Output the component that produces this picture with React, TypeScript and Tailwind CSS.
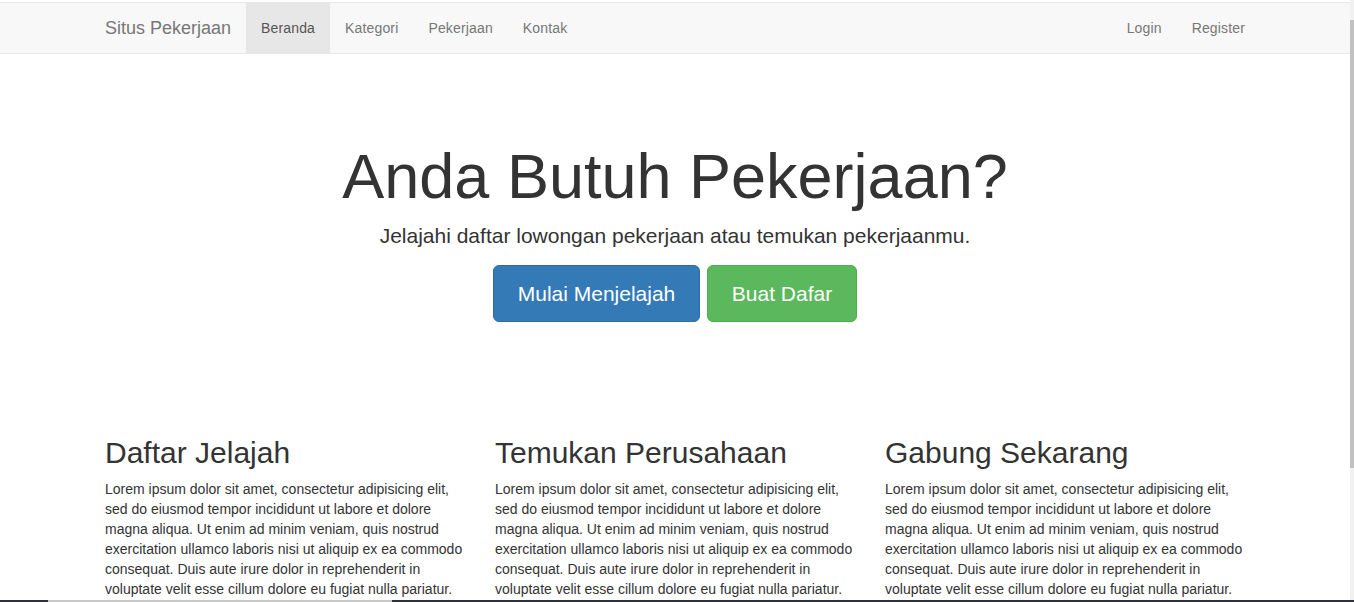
import React from "react";

const lorem =
  "Lorem ipsum dolor sit amet, consectetur adipisicing elit, sed do eiusmod tempor incididunt ut labore et dolore magna aliqua. Ut enim ad minim veniam, quis nostrud exercitation ullamco laboris nisi ut aliquip ex ea commodo consequat. Duis aute irure dolor in reprehenderit in voluptate velit esse cillum dolore eu fugiat nulla pariatur. Excepteur sint occaecat cupidatat non proident, sunt in culpa qui officia deserunt mollit anim id est laborum.";

const features = ["Daftar Jelajah", "Temukan Perusahaan", "Gabung Sekarang"];

export default function App() {
  return (
    <div
      className="relative flex h-screen w-full overflow-hidden bg-white text-[#333]"
      style={{ fontFamily: '"Liberation Sans", Arial, Helvetica, sans-serif' }}
    >
      <div className="w-[1350px] shrink-0">
        <nav className="mt-[2px] h-[52px] border-y border-[#e7e7e7] bg-[#f8f8f8]">
          <div className="mx-auto flex h-[50px] w-[1170px] px-[15px]">
            <a className="-ml-[15px] flex h-[50px] items-center px-[15px] text-[18px] text-[#777]">
              Situs Pekerjaan
            </a>
            <ul className="flex text-[14px] tracking-[0.15px]">
              <li className="flex h-[50px] items-center bg-[#e7e7e7] px-[15px] text-[#555]">Beranda</li>
              <li className="flex h-[50px] items-center px-[15px] text-[#777]">Kategori</li>
              <li className="flex h-[50px] items-center px-[15px] text-[#777]">Pekerjaan</li>
              <li className="flex h-[50px] items-center px-[15px] text-[#777]">Kontak</li>
            </ul>
            <ul className="-mr-[15px] ml-auto flex text-[14px] tracking-[0.15px]">
              <li className="flex h-[50px] items-center px-[15px] text-[#777]">Login</li>
              <li className="flex h-[50px] items-center px-[15px] text-[#777]">Register</li>
            </ul>
          </div>
        </nav>

        <section className="pt-[68px] pb-[48px] text-center">
          <h1 className="mt-[20px] mb-[10px] text-[63px] leading-[1.1] font-normal">
            Anda Butuh Pekerjaan?
          </h1>
          <p className="mb-[14px] text-[21px] leading-[30px]">
            Jelajahi daftar lowongan pekerjaan atau temukan pekerjaanmu.
          </p>
          <div className="mb-[16px] flex justify-center gap-[7px]">
            <a className="flex h-[57px] w-[207px] items-center justify-center rounded-[6px] border border-[#2e6da4] bg-[#337ab7] text-[21px] text-white">
              Mulai Menjelajah
            </a>
            <a className="flex h-[57px] w-[150px] items-center justify-center rounded-[6px] border border-[#4cae4c] bg-[#5cb85c] text-[21px] text-white">
              Buat Dafar
            </a>
          </div>
        </section>

        <div className="mx-auto mt-[30px] flex w-[1170px]">
          {features.map((t) => (
            <div key={t} className="w-[390px] px-[15px]">
              <h2 className="mt-[20px] mb-[10px] text-[30px] leading-[1.1] font-normal">{t}</h2>
              <p className="text-[14px] leading-[20px]">{lorem}</p>
            </div>
          ))}
        </div>
      </div>

      <div className="flex w-[4px] shrink-0 flex-col bg-[#f1f1f1]">
        <div className="mt-[20px] h-[448px] bg-[#c1c1c1]" />
      </div>

      <div className="fixed bottom-0 left-0 right-0 flex h-[2px] bg-[#2b323b]">
        <div className="ml-[48px] w-[344px] bg-[#c8c8c8]" />
      </div>
    </div>
  );
}
